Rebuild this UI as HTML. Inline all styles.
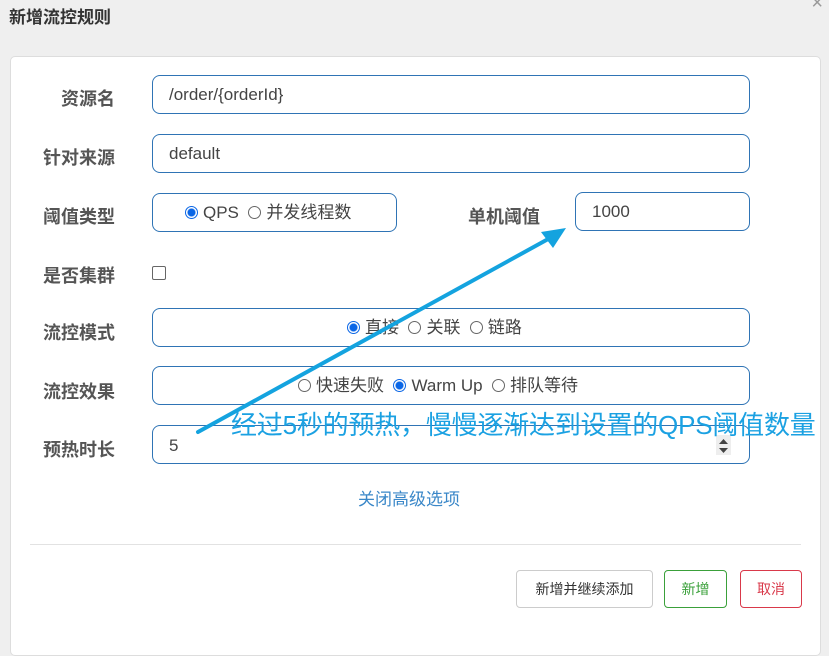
<!DOCTYPE html>
<html><head><meta charset="utf-8"><style>
*{box-sizing:border-box;margin:0;padding:0}
body{width:829px;height:617px;background:#efefef;position:relative;overflow:hidden;font-family:"Liberation Sans","Noto Sans CJK SC",sans-serif;color:#333}
.a{position:absolute}
.title{left:9px;top:3px;font-size:17px;font-weight:bold;color:#333}
.card{left:10px;top:56px;width:811px;height:600px;background:#fff;border:1px solid #ddd;border-radius:5px}
.lbl{font-size:18px;font-weight:bold;color:#555;text-align:right;width:82px;left:33px}
.box{border:1px solid #2f74b5;border-radius:8px;background:#fff;font-size:17px;color:#444;height:39px;line-height:37px}
.r{display:inline-block;width:13px;height:13px;border:1px solid #666;border-radius:50%;vertical-align:-1px;margin-right:5px;background:#fff}
.r.on{border:1px solid #0a66e6;background:radial-gradient(circle,#0a66e6 3.5px,#fff 4.5px)}
.btn{height:38px;line-height:36px;border-radius:4px;font-size:14px;text-align:center;background:#fff}
</style></head><body>
<div class="a title">新增流控规则</div>
<div class="a" style="right:6px;top:-8px;font-size:20px;color:#999">×</div>
<div class="a card"></div>
<div class="a lbl" style="top:85px">资源名</div>
<div class="a box" style="left:152px;top:75px;width:598px;padding-left:16px">/order/{orderId}</div>
<div class="a lbl" style="top:144px">针对来源</div>
<div class="a box" style="left:152px;top:134px;width:598px;padding-left:16px">default</div>
<div class="a lbl" style="top:203px">阈值类型</div>
<div class="a box" style="left:152px;top:193px;width:245px;padding-left:32px"><span class="r on"></span>QPS&nbsp; <span class="r"></span>并发线程数</div>
<div class="a lbl" style="left:458px;top:203px">单机阈值</div>
<div class="a box" style="left:575px;top:192px;width:175px;padding-left:16px">1000</div>
<div class="a lbl" style="top:262px">是否集群</div>
<div class="a" style="left:152px;top:266px;width:14px;height:14px;border:1px solid #666;border-radius:2px"></div>
<div class="a lbl" style="top:319px">流控模式</div>
<div class="a box" style="left:152px;top:308px;width:598px;padding-left:194px"><span class="r on"></span>直接 &nbsp;<span class="r"></span>关联 &nbsp;<span class="r"></span>链路</div>
<div class="a lbl" style="top:378px">流控效果</div>
<div class="a box" style="left:152px;top:366px;width:598px;padding-left:145px"><span class="r"></span>快速失败 &nbsp;<span class="r on"></span>Warm Up &nbsp;<span class="r"></span>排队等待</div>
<div class="a lbl" style="top:436px">预热时长</div>
<div class="a box" style="left:152px;top:425px;width:598px;padding-left:16px;line-height:39px">5</div>
<div class="a" style="left:716px;top:435px;width:15px;height:20px;background:#eee"></div>
<svg class="a" style="left:716px;top:436px" width="15" height="20"><path d="M3 8 L7.5 3 L12 8Z M3 12 L7.5 17 L12 12Z" fill="#444"/></svg>
<div class="a" style="left:358px;top:485px;font-size:17px;color:#3a87c8">关闭高级选项</div>
<div class="a" style="left:30px;top:544px;width:771px;height:1px;background:#e2e2e2"></div>
<div class="a btn" style="left:516px;top:570px;width:137px;border:1px solid #ccc;color:#333">新增并继续添加</div>
<div class="a btn" style="left:664px;top:570px;width:63px;border:1px solid #3aa03a;color:#3aa03a">新增</div>
<div class="a btn" style="left:740px;top:570px;width:62px;border:1px solid #d9394a;color:#d9394a">取消</div>
<svg class="a" style="left:0;top:0" width="829" height="617">
<line x1="198" y1="432" x2="550" y2="238" stroke="#14a3df" stroke-width="4" stroke-linecap="round"/>
<path d="M566 228 L541 232 L553 248Z" fill="#14a3df"/>
</svg>
<div class="a" style="left:231px;top:405px;font-size:26px;color:#1ba1e2;white-space:nowrap;letter-spacing:-0.2px">经过5秒的预热，慢慢逐渐达到设置的QPS阈值数量</div>
</body></html>
